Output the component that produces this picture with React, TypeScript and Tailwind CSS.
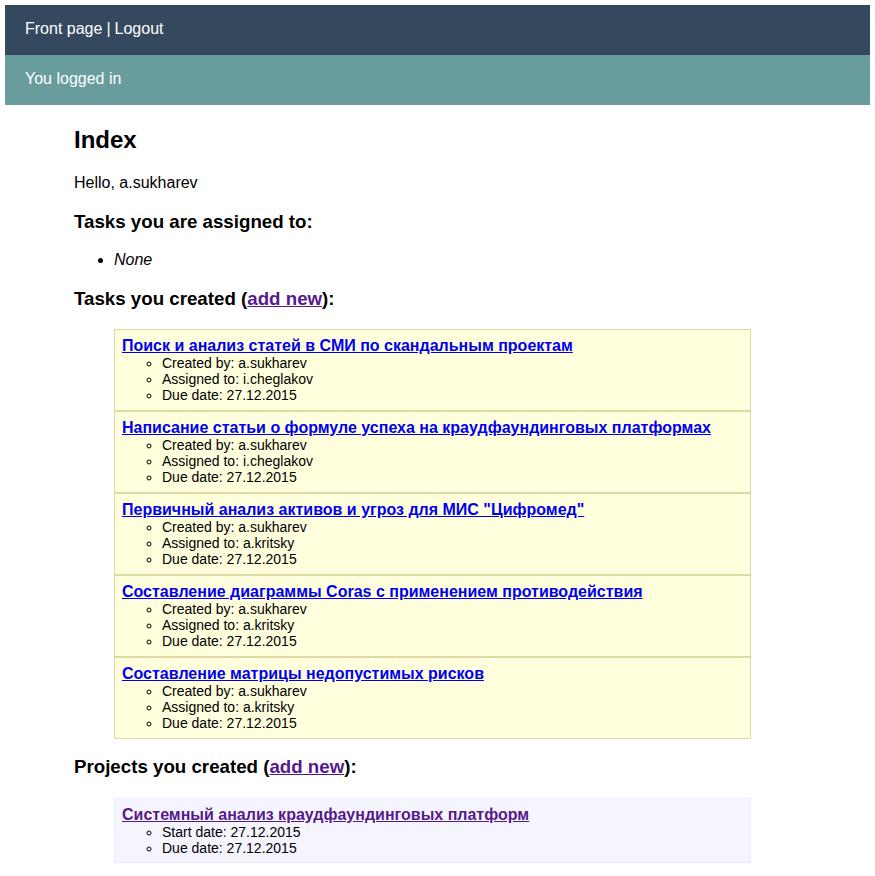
import React from "react";

const tasks = [
  { title: "Поиск и анализ статей в СМИ по скандальным проектам", assigned: "i.cheglakov" },
  { title: "Написание статьи о формуле успеха на краудфаундинговых платформах", assigned: "i.cheglakov" },
  { title: "Первичный анализ активов и угроз для МИС \"Цифромед\"", assigned: "a.kritsky" },
  { title: "Составление диаграммы Coras с применением противодействия", assigned: "a.kritsky" },
  { title: "Составление матрицы недопустимых рисков", assigned: "a.kritsky" },
];

export default function App() {
  return (
    <div
      className="bg-white p-[5px] text-black min-h-[876px]"
      style={{ fontFamily: '"Liberation Sans", Arial, sans-serif' }}
    >
      <div className="bg-[#34495e] h-[50px] flex items-center pb-[2px] px-5 text-white text-[16px]">
        <a href="#" className="text-white">Front page</a>
        <span className="mx-[4px]">|</span>
        <a href="#" className="text-white">Logout</a>
      </div>
      <div className="bg-[#699d9d] h-[50px] flex items-center pb-[2px] px-5 text-white text-[16px]">
        You logged in
      </div>
      <div className="pl-[69px] pr-[119px]">
        <h2 className="text-[24px] font-bold leading-[27.6px] mt-[21px] mb-[20px]">Index</h2>
        <p className="text-[16px] leading-[18.4px]">Hello, a.sukharev</p>
        <h3 className="text-[18.72px] font-bold leading-[21.5px] mt-[18.72px] mb-[18.72px]">
          Tasks you are assigned to:
        </h3>
        <ul className="list-disc pl-[40px] text-[16px] leading-[18.4px]">
          <li className="italic">None</li>
        </ul>
        <h3 className="text-[18.72px] font-bold leading-[21.5px] mt-[18.72px] mb-[19px]">
          Tasks you created (<a href="#" className="text-[#551a8b] underline">add new</a>):
        </h3>
        <div className="pl-[40px]">
          {tasks.map((t, i) => (
            <div key={i} className="bg-[#ffffdd] border border-[#dddba3] px-[7px] py-[7px]">
              <a href="#" className="block text-[#0000ee] underline font-bold text-[16px] leading-[18px]">
                {t.title}
              </a>
              <ul className="list-[circle] pl-[40px] text-[14px] leading-[16px]">
                <li>Created by: a.sukharev</li>
                <li>Assigned to: {t.assigned}</li>
                <li>Due date: 27.12.2015</li>
              </ul>
            </div>
          ))}
        </div>
        <h3 className="text-[18.72px] font-bold leading-[21.5px] mt-[17px] mb-[20.5px]">
          Projects you created (<a href="#" className="text-[#551a8b] underline">add new</a>):
        </h3>
        <div className="pl-[40px]">
          <div className="bg-[#f5f5ff] border border-[#ececfa] px-[7px] pt-[7px] pb-[6px]">
            <a href="#" className="block text-[#551a8b] underline font-bold text-[16px] leading-[18px]">
              Системный анализ краудфаундинговых платформ
            </a>
            <ul className="list-[circle] pl-[40px] text-[14px] leading-[16px]">
              <li>Start date: 27.12.2015</li>
              <li>Due date: 27.12.2015</li>
            </ul>
          </div>
        </div>
      </div>
    </div>
  );
}
